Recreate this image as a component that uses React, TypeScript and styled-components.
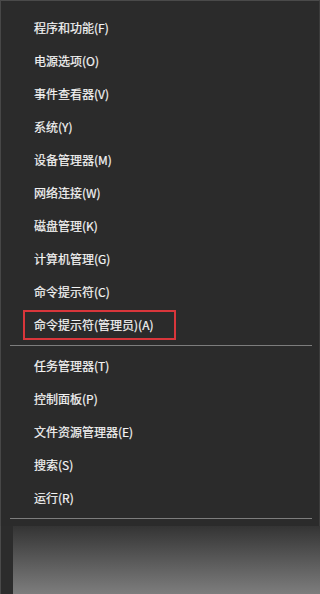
import React from "react";
import styled, { createGlobalStyle } from "styled-components";

const GlobalStyle = createGlobalStyle`
  html, body {
    margin: 0;
    padding: 0;
    background: #2b2b2b;
  }
  body {
    font-family: "Noto Sans CJK SC", "Microsoft YaHei", sans-serif;
  }
`;

const Screen = styled.div`
  width: 100%;
  min-width: 229px;
  height: 594px;
  display: flex;
  flex-direction: column;
  overflow: hidden;
`;

const Menu = styled.ul`
  margin: 0;
  padding: 10px 0 4px;
  list-style: none;
  background: #2b2b2b;
  border-top: 1px solid #4a4a4a;
  border-left: 1px solid #474747;
  border-right: 1px solid #3c3c3c;
  box-sizing: border-box;
  width: 100%;
`;

const Item = styled.li`
  height: 33px;
  display: flex;
  align-items: center;
  padding-left: 33px;
  color: #f4f4f4;
  font-size: 12px;
  white-space: nowrap;
  -webkit-text-stroke: 0.2px #f4f4f4;
`;

const Highlight = styled.span`
  display: flex;
  align-items: center;
  box-sizing: border-box;
  height: 30px;
  margin-left: -11px;
  padding: 0 20px 0 9px;
  border: 2px solid #d9363b;
`;

const Separator = styled.li`
  height: 8px;
  display: flex;
  align-items: center;
  padding: 0 7px 0 9px;

  &::before {
    content: "";
    flex: 1;
    height: 1px;
    background: #7d7d7d;
  }
`;

const Desktop = styled.div`
  flex: 1;
  display: flex;
`;

const Taskbar = styled.div`
  width: 12px;
  background: #2c2c2c;
  border-left: 1px solid #4a4a4a;
`;

const Wallpaper = styled.div`
  flex: 1;
  background: linear-gradient(to bottom, #343434 0%, #555 45%, #7d7d7d 100%);
`;

const groups = [
  [
    "程序和功能(F)",
    "电源选项(O)",
    "事件查看器(V)",
    "系统(Y)",
    "设备管理器(M)",
    "网络连接(W)",
    "磁盘管理(K)",
    "计算机管理(G)",
    "命令提示符(C)",
    "命令提示符(管理员)(A)",
  ],
  ["任务管理器(T)", "控制面板(P)", "文件资源管理器(E)", "搜索(S)", "运行(R)"],
];

const marked = "命令提示符(管理员)(A)";

export default function App() {
  return (
    <Screen>
      <GlobalStyle />
      <Menu>
        {groups.map((group, g) => (
          <React.Fragment key={g}>
            {group.map((label) => (
              <Item key={label}>
                {label === marked ? <Highlight>{label}</Highlight> : label}
              </Item>
            ))}
            <Separator />
          </React.Fragment>
        ))}
      </Menu>
      <Desktop>
        <Taskbar />
        <Wallpaper />
      </Desktop>
    </Screen>
  );
}
